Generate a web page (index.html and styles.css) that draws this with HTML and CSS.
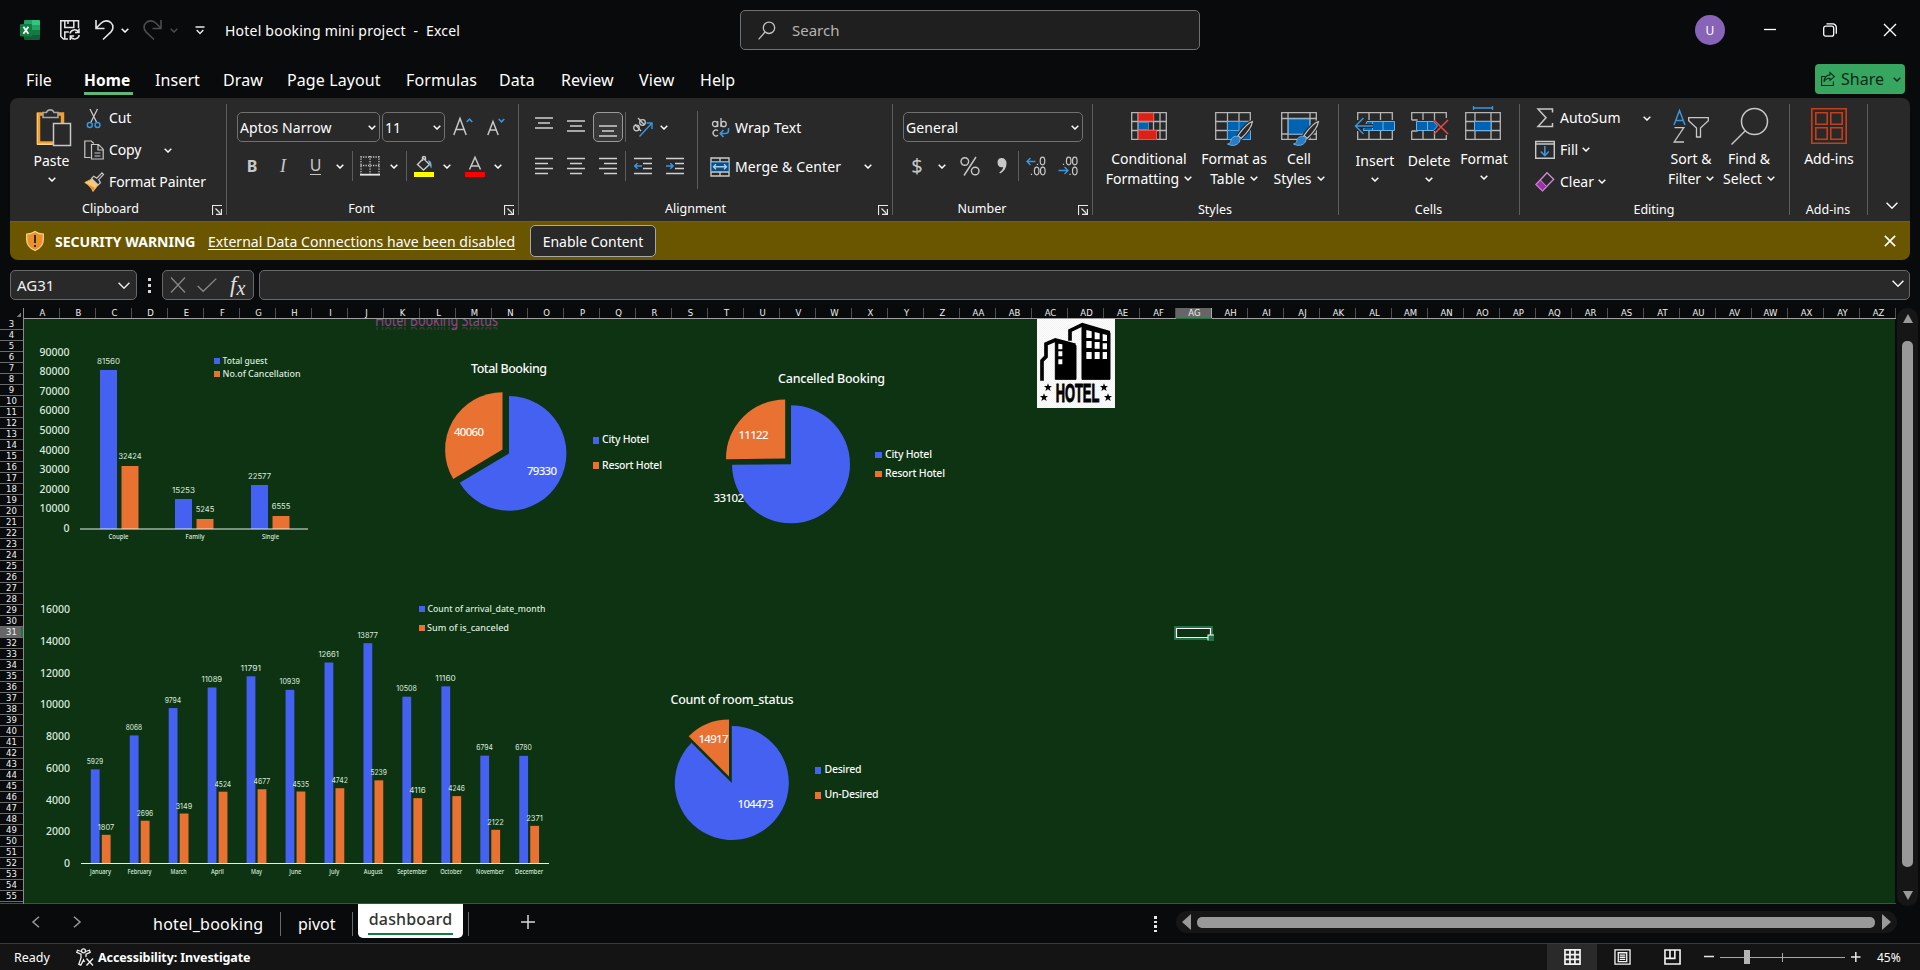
FILE: index.html
```html
<!DOCTYPE html>
<html lang="en">
<head>
<meta charset="utf-8">
<title>Hotel booking mini project - Excel</title>
<link rel="stylesheet" href="styles.css">
</head>
<body>
<svg class="defs" aria-hidden="true">
  <symbol id="chev" viewBox="0 0 8 5"><path d="M.7.8 4 4 7.3.8" fill="none" stroke="currentColor" stroke-width="1.5"/></symbol>
  <symbol id="chev-lg" viewBox="0 0 12 7"><path d="M.6.8 6 6.2 11.4.8" fill="none" stroke="currentColor" stroke-width="1.4"/></symbol>
  <symbol id="launch" viewBox="0 0 10 10"><path d="M.5 10V.5H10M3.5 3.5l5 5M9.4 4v5.4H4" fill="none" stroke="#e8e8e8" stroke-width="1.2"/></symbol>
</svg>

<header class="titlebar">
  <svg class="ico excel" viewBox="0 0 20 20" width="20" height="20"><rect x="4" width="16" height="20" rx="1.2" fill="#185c37"/><path d="M4 1.2Q4 0 5.2 0H12v10H4z" fill="#21a366"/><path d="M12 0h6.8Q20 0 20 1.2V5h-8z" fill="#33c481"/><path d="M12 5h8v5h-8z" fill="#21a366"/><path d="M12 10h8v5h-8z" fill="#107c41"/><rect y="4" width="12" height="12.500" rx="1.200" fill="#107c41"/><path d="M3.400 6.800l5 7M8.400 6.800l-5 7" stroke="#fff" stroke-width="1.800"/></svg>
  <svg class="ico save" viewBox="0 0 20 20" width="20" height="20" fill="none" stroke="#e6e6e6" stroke-width="1.500"><path d="M8 19H3.500L.8 16.500V.8h17.700V8M4.800 1v6.500h9V1M4.800 19v-7h4M8 1v3"/><path d="M10 13.500a4.700 4.700 0 0 1 8.500-1.500M19 8.500V12.500h-4M19.200 15a4.700 4.700 0 0 1-8.500 2M10.300 20v-4h3.800"/></svg>
  <svg class="ico undo" viewBox="0 0 20 20" width="20" height="20" fill="none" stroke="#e6e6e6" stroke-width="1.600"><path d="M1 0v8.500h8.500M1.300 8 6 3.200C9 .2 13.500.2 16 2.700c2.600 2.600 2.600 6.500 0 9.200L8 19.500"/></svg>
  <svg class="chev undo-c"><use href="#chev"/></svg>
  <svg class="ico redo" viewBox="0 0 20 20" width="20" height="20" fill="none" stroke="#4d4d4d" stroke-width="1.600"><path d="M18 0v8.500H9.500M17.700 8 13 3.200C10 .2 5.500.2 3 2.700.4 5.300.4 9.200 3 11.900l8 7.600"/></svg>
  <svg class="chev redo-c"><use href="#chev"/></svg>
  <svg class="ico custom" viewBox="0 0 10 9" width="10" height="9" fill="none" stroke="#e6e6e6" stroke-width="1.500"><path d="M.5 1h9M1.700 4 5 7.400 8.300 4"/></svg>
  <span class="doc-title">Hotel booking mini project&nbsp; -&nbsp; Excel</span>
  <div class="search">
    <svg viewBox="0 0 18 19" width="18" height="19" fill="none" stroke="#c4c4c4" stroke-width="1.300"><circle cx="11" cy="6.800" r="5.700"/><path d="M7 11 .6 18.400"/></svg>
    <span>Search</span>
  </div>
  <div class="window-tools">
    <span class="avatar">U</span>
    <svg class="wbtn" viewBox="0 0 14 14"><path d="M1 6.500h12" stroke="#fff" stroke-width="1.300"/></svg>
    <svg class="wbtn" viewBox="0 0 14 14" fill="none" stroke="#fff" stroke-width="1.300"><rect x=".7" y="3.200" width="10" height="10" rx="2"/><path d="M3.500.9h6.300a3.500 3.500 0 0 1 3.500 3.500v6.300"/></svg>
    <svg class="wbtn" viewBox="0 0 14 14"><path d="M1 1l12 12M13 1 1 13" stroke="#fff" stroke-width="1.400"/></svg>
  </div>
</header>

<nav class="tabs">
  <span class="tab file">File</span><span class="tab home">Home</span><span class="tab insert">Insert</span><span class="tab draw">Draw</span><span class="tab layout">Page Layout</span><span class="tab formulas">Formulas</span><span class="tab data">Data</span><span class="tab review">Review</span><span class="tab view">View</span><span class="tab help">Help</span>
  <button class="share"><svg viewBox="0 0 14 14" width="14" height="14" fill="none" stroke="#0c2a18" stroke-width="1.100"><path d="M4 4.500H.6v9h11.800V9.500M9 .7l4.400 3.900L9 8.300V6.200C6 6.200 4.200 7.400 3 9.800c.2-4 2.500-6.500 6-6.900z"/></svg><span>Share</span><svg class="chev"><use href="#chev"/></svg></button>
</nav>

<section class="ribbon">
  <div class="group clipboard">
    <div class="body">
      <div class="big paste low">
        <svg viewBox="30 104 44 44"><path d="M38.500 114h24v29h-24z" fill="none" stroke="#f0a030" stroke-width="3.500"/><path d="M37.300 113v31.500h15M38.500 144h14" fill="none" stroke="#fbd58a" stroke-width="1"/><path d="M43 117.500v-5h3.500a4 4 0 0 1 7.500 0h4v5z" fill="#292929" stroke="#a6a6a6" stroke-width="1.600"/><path d="M53.500 123.500h17v22h-17z" fill="#292929" stroke="#c8c8c8" stroke-width="1.500"/></svg>
        <span>Paste</span><svg class="chev"><use href="#chev"/></svg>
      </div>
      <div class="list">
        <div class="li"><svg viewBox="0 0 20 20"><path d="M6 1l6.500 13M13.500 1 7 14" stroke="#c8c8c8" stroke-width="1.300" fill="none"/><circle cx="5.800" cy="17" r="2.500" fill="none" stroke="#3a96dd" stroke-width="1.400"/><circle cx="13.500" cy="17" r="2.500" fill="none" stroke="#3a96dd" stroke-width="1.400"/></svg><span>Cut</span></div>
        <div class="li"><svg viewBox="0 0 20 20" fill="none" stroke="#c8c8c8" stroke-width="1.200"><path d="M6.500 17.500H.8V1h6.500l2.500 2.500M7.500 4.500h7l4.700 4.700V19H7.500zM14 4.500V10h5M10.500 13h6M10.500 16h6"/></svg><span>Copy</span><svg class="chev far"><use href="#chev"/></svg></div>
        <div class="li"><svg viewBox="0 0 20 20"><path d="M.8 10.500 8 7l6 6-5 6.500c-1-3.500-4-6.500-8.200-9z" fill="#f7c878" stroke="#f3b24c"/><path d="M3 12l8 4-2 3z" fill="#e8912d"/><path d="M7.500 6.500l2.300-2.300 3 2L18 .9l1.500 1.500-4.800 5.300 1.800 3-2.400 2.300z" fill="#292929" stroke="#c8c8c8" stroke-width="1.200"/></svg><span>Format Painter</span></div>
      </div>
    </div>
    <div class="foot"><span>Clipboard</span><svg class="launch"><use href="#launch"/></svg></div>
  </div>

  <div class="group font">
    <div class="body rows">
      <div class="row font-1">
        <div class="combo"><span>Aptos Narrow</span><svg class="chev"><use href="#chev"/></svg></div>
        <div class="combo size"><span>11</span><svg class="chev"><use href="#chev"/></svg></div>
        <svg class="i20" viewBox="0 0 20 20" fill="none" stroke="#c8c8c8" stroke-width="1.500"><path d="M.8 18 7 1.500 13.200 18M3 12.500h8"/><path d="M13.700 5l2.800-2.800L19.300 5" stroke="#3a96dd" stroke-width="1.600"/></svg>
        <svg class="i20" viewBox="0 0 20 20" fill="none" stroke="#c8c8c8" stroke-width="1.500"><path d="M1.800 18 7 4.500 12.200 18M3.500 13h7"/><path d="M12.700 2l2.800 2.800L18.300 2" stroke="#3a96dd" stroke-width="1.600"/></svg>
      </div>
      <div class="row font-2">
        <b class="glyph">B</b><i class="glyph it">I</i><span class="glyph un">U</span><svg class="chev"><use href="#chev"/></svg><hr>
        <svg class="i20" viewBox="0 0 20 20"><path d="M.5 1h19M.5 9.500h19M1 0v18M10 0v18M19 0v18" stroke="#c8c8c8" stroke-width="1.300" stroke-dasharray="1.300 1.200"/><path d="M0 18.700h20" stroke="#e6e6e6" stroke-width="1.800"/></svg>
        <svg class="chev"><use href="#chev"/></svg><hr>
        <svg class="i20" viewBox="0 0 20 20"><path d="M9.500 2.500l6 6-6 5.500-6-5.500zM8.500 5V1.500Q8.500.5 10 .5t1.500 1V5" fill="none" stroke="#c8c8c8" stroke-width="1.400"/><path d="M14 4.500c3 0 4 2.500 3.500 8-1.300-1.500-2-3.500-2.200-5z" fill="#69b1e6"/><path d="M0 16h20v5H0z" fill="#ff0"/></svg>
        <svg class="chev"><use href="#chev"/></svg>
        <svg class="i20" viewBox="0 0 20 20"><path d="M4.500 13.500 10 1.300 15.500 13.500M6.500 10h7" fill="none" stroke="#c8c8c8" stroke-width="1.500"/><path d="M0 16h20v5H0z" fill="#f00"/></svg>
        <svg class="chev"><use href="#chev"/></svg>
      </div>
    </div>
    <div class="foot"><span>Font</span><svg class="launch"><use href="#launch"/></svg></div>
  </div>

  <div class="group align">
    <div class="body">
      <div class="rows al-left">
        <div class="row al-1">
          <svg class="i18" viewBox="0 0 18 20"><path d="M0 4h18M3 9h12M0 14h18" stroke="#d0d0d0" stroke-width="1.400" transform="translate(0 -3)"/></svg>
          <svg class="i18" viewBox="0 0 18 20"><path d="M0 4h18M3 9h12M0 14h18" stroke="#d0d0d0" stroke-width="1.400"/></svg>
          <span class="pressed"><svg class="i18" viewBox="0 0 18 20"><path d="M0 4h18M3 9h12M0 14h18" stroke="#d0d0d0" stroke-width="1.400" transform="translate(0 5)"/></svg></span><hr>
          <svg class="i20" viewBox="0 0 20 20"><g fill="none" stroke="#c8c8c8" stroke-width="1.300"><ellipse cx="3.500" cy="11" rx="2.800" ry="2.800"/><path d="M2 7.500l6 6.500"/><ellipse cx="9.500" cy="5.500" rx="2.800" ry="2.800"/><path d="M5 1l6 6.500"/></g><path d="M6.500 19.500 19 6M13.500 6H19v6" fill="none" stroke="#3a96dd" stroke-width="1.400"/></svg>
          <svg class="chev"><use href="#chev"/></svg>
        </div>
        <div class="row al-2">
          <svg class="i18" viewBox="0 0 18 20"><path d="M0 2.500h18M0 7.500h13M0 12.500h18M0 17.500h13" stroke="#d0d0d0" stroke-width="1.400"/></svg>
          <svg class="i18" viewBox="0 0 18 20"><path d="M0 2.500h18M3 7.500h12M0 12.500h18M3 17.500h12" stroke="#d0d0d0" stroke-width="1.400"/></svg>
          <svg class="i18" viewBox="0 0 18 20"><path d="M0 2.500h18M5 7.500h13M0 12.500h18M5 17.500h13" stroke="#d0d0d0" stroke-width="1.400"/></svg><hr>
          <svg class="i18" viewBox="0 0 18 20"><path d="M0 2.500h18M9 7.500h9M9 12.500h9M0 17.500h18" stroke="#d0d0d0" stroke-width="1.400"/><path d="M8 10H.8M3.500 7.200.7 10l2.800 2.800" fill="none" stroke="#3a96dd" stroke-width="1.500"/></svg>
          <svg class="i18" viewBox="0 0 18 20"><path d="M0 2.500h18M9 7.500h9M9 12.500h9M0 17.500h18" stroke="#d0d0d0" stroke-width="1.400"/><path d="M0 10h7M4.300 7.200l2.800 2.800-2.800 2.800" fill="none" stroke="#3a96dd" stroke-width="1.500"/></svg>
        </div>
      </div>
      <div class="rows al-right">
        <div class="row li"><svg viewBox="0 0 20 20"><g fill="none" stroke="#c8c8c8" stroke-width="1.300"><ellipse cx="5" cy="6" rx="2.500" ry="2.700"/><path d="M7.700 3v6M11 0v9"/><ellipse cx="13.700" cy="6" rx="2.500" ry="2.700"/><path d="M8 12.700a3 3 0 1 0 0 4.600"/></g><path d="M18.500 10v2.500q0 3-3 3H10.500M13.500 12l-3.300 3.500 3.300 3.500" fill="none" stroke="#3a96dd" stroke-width="1.600"/></svg><span>Wrap Text</span></div>
        <div class="row li"><svg viewBox="0 0 20 20"><path d="M1 1h18v18H1zM10 1v4M10 15v4M1 5h18M1 15h18" fill="none" stroke="#c8c8c8" stroke-width="1.400"/><path d="M1 5h18v9.500H1z" fill="#0f4a7a" stroke="#69b1e6"/><path d="M3.500 9.800h13M6 7.300 3.500 9.800 6 12.300M14 7.300l2.500 2.500L14 12.300" fill="none" stroke="#9fd0f5" stroke-width="1.400"/></svg><span>Merge &amp; Center</span><svg class="chev far"><use href="#chev"/></svg></div>
      </div>
    </div>
    <div class="foot"><span>Alignment</span><svg class="launch"><use href="#launch"/></svg></div>
  </div>

  <div class="group number">
    <div class="body rows">
      <div class="row"><div class="combo gen"><span>General</span><svg class="chev"><use href="#chev"/></svg></div></div>
      <div class="row num-2">
        <span class="glyph dollar">$</span><svg class="chev"><use href="#chev"/></svg>
        <svg class="i20" viewBox="0 0 20 20" fill="none" stroke="#c8c8c8" stroke-width="1.400"><circle cx="4.800" cy="5.500" r="3.800"/><circle cx="15.200" cy="15" r="3.800"/><path d="M16 1 4 19.500"/></svg>
        <svg class="i20" viewBox="0 0 20 20"><path d="M9.500 2a4.800 4.800 0 0 1 5 5c0 5-2.500 8.500-6.500 10.500l-.7-1C9.500 15 11 13 11.200 11 8 12 5.500 10 5.500 6.500 5.500 4 7 2 9.500 2z" fill="#c8c8c8"/></svg><hr>
        <svg class="i20" viewBox="0 0 20 20"><path d="M9.500 5.500H1M4.500 2 1 5.500 4.500 9" fill="none" stroke="#3a96dd" stroke-width="1.400"/><g fill="none" stroke="#c8c8c8" stroke-width="1.200"><ellipse cx="16.500" cy="5" rx="2.300" ry="3.800"/><ellipse cx="10.700" cy="15" rx="2.300" ry="3.800"/><ellipse cx="16.800" cy="15" rx="2.300" ry="3.800"/><path d="M11.500 9V7.800M5.500 19v-1.200"/></g></svg>
        <svg class="i20" viewBox="0 0 20 20"><path d="M.5 14.500H10M6.500 11l3.500 3.500L6.500 18" fill="none" stroke="#3a96dd" stroke-width="1.400"/><g fill="none" stroke="#c8c8c8" stroke-width="1.200"><ellipse cx="10.700" cy="5" rx="2.300" ry="3.800"/><ellipse cx="16.800" cy="5" rx="2.300" ry="3.800"/><ellipse cx="16.800" cy="15" rx="2.300" ry="3.800"/><path d="M5.500 9V7.800M12 19v-1.200"/></g></svg>
      </div>
    </div>
    <div class="foot"><span>Number</span><svg class="launch"><use href="#launch"/></svg></div>
  </div>

  <div class="group styles">
    <div class="body">
      <div class="big w84">
        <svg viewBox="1127 104 44 44"><path d="M1131.700 112.700h34.600v26.600h-34.600zM1131 121.500h36M1131 130.500h36M1138 112v28M1153.500 112v28M1160 112v28" fill="none" stroke="#b5b5b5" stroke-width="1.300"/><path d="M1138.500 113h15v8h-15zM1138.500 130.500h18v9h-18z" fill="#d92316" stroke="#f0504a"/><path d="M1138.500 122.500h10v7h-10z" fill="#0063b1" stroke="#69b1e6" stroke-width=".6"/></svg>
        <span>Conditional</span><span>Formatting <svg class="chev"><use href="#chev"/></svg></span>
      </div>
      <div class="big w86">
        <svg viewBox="1212 104 44 44"><path d="M1215.700 112.700h34.600v26.600h-34.600zM1215 121.500h36M1215 130.500h36M1227.500 112v28M1239 112v28" fill="none" stroke="#b5b5b5" stroke-width="1.300"/><path d="M1227.500 121.500h23v18h-23z" fill="#0063b1" stroke="#69b1e6" stroke-width=".8"/><path d="M1227.500 130.500h23M1239 121.500v18" stroke="#69b1e6" stroke-width=".8"/><path d="M1252.500 121.500c-5 1.500-11 9-14.500 14l3 3c5-4.500 10.500-11 11.500-17z" fill="#292929" stroke="#292929" stroke-width="3.500"/><path d="M1252.500 121.500c-5 1.500-11 9-14.500 14l3 3c5-4.500 10.500-11 11.500-17z" fill="#292929" stroke="#c8c8c8" stroke-width="1.200"/><path d="M1238 136.500c3 .5 2.500 4 .5 6.500-3 3-7 3-11 1 3-.5 3-2 3.500-4 .8-2.500 3.500-4.500 7-3.500z" fill="#2b7cc4" stroke="#69b1e6"/></svg>
        <span>Format as</span><span>Table <svg class="chev"><use href="#chev"/></svg></span>
      </div>
      <div class="big w44">
        <svg viewBox="1278 104 44 44"><path d="M1282.700 112.700h34.600v26.600h-34.600zM1282 118.500h36M1282 134h36M1289 112v28M1311 112v28" fill="none" stroke="#b5b5b5" stroke-width="1.300"/><path d="M1289.500 119h21v15h-21z" fill="#0063b1" stroke="#69b1e6" stroke-width=".8"/><path d="M1319.500 121.500c-5 1.500-11 9-14.500 14l3 3c5-4.500 10.500-11 11.500-17z" fill="#292929" stroke="#292929" stroke-width="3.500"/><path d="M1319.500 121.500c-5 1.500-11 9-14.500 14l3 3c5-4.500 10.500-11 11.500-17z" fill="#292929" stroke="#c8c8c8" stroke-width="1.200"/><path d="M1305 136.500c3 .5 2.500 4 .5 6.500-3 3-7 3-11 1 3-.5 3-2 3.500-4 .8-2.500 3.500-4.500 7-3.500z" fill="#2b7cc4" stroke="#69b1e6"/></svg>
        <span>Cell</span><span>Styles <svg class="chev"><use href="#chev"/></svg></span>
      </div>
    </div>
    <div class="foot low"><span>Styles</span></div>
  </div>

  <div class="group cells">
    <div class="body">
      <div class="big w54 low">
        <svg viewBox="1353 104 44 44"><path d="M1357.700 120v-7.300h34.600V120M1357.700 131v8.300h34.600V131M1369 112v8M1380.500 112v8M1369 131v9M1380.500 131v9" fill="none" stroke="#b5b5b5" stroke-width="1.300"/><path d="M1367 121.500h27.500v9H1363z" fill="#0063b1" stroke="#69b1e6"/><path d="M1372.500 122v8M1383 122v8" stroke="#69b1e6"/><path d="M1373 126h-16M1364 117.500l-8 8.500 8 8.500" fill="none" stroke="#292929" stroke-width="4"/><path d="M1373 126h-17M1363.500 118l-8 8 8 8" fill="none" stroke="#3a96dd" stroke-width="1.500"/></svg>
        <span>Insert</span><svg class="chev"><use href="#chev"/></svg>
      </div>
      <div class="big w54 low">
        <svg viewBox="1407 104 44 44"><path d="M1411.700 120v-7.300h34.600V118M1411.700 120h6M1411.700 131v8.300h34.600V135M1411.700 131h6M1423 112v8M1434.500 112v8M1423 131v9M1434.500 131v9" fill="none" stroke="#b5b5b5" stroke-width="1.300"/><path d="M1416.500 121.500h17l4 4.500-4 4.500h-17z" fill="#0063b1" stroke="#69b1e6"/><path d="M1427.500 122v8" stroke="#69b1e6"/><path d="M1434 120l14 14M1448 120l-14 14" stroke="#e8484a" stroke-width="1.500"/></svg>
        <span>Delete</span><svg class="chev"><use href="#chev"/></svg>
      </div>
      <div class="big w56">
        <svg viewBox="1462 104 44 44"><path d="M1465.700 112.700h34.600v26.600h-34.600zM1465 121.500h36M1465 130.500h36M1475 112v28M1491 112v28" fill="none" stroke="#b5b5b5" stroke-width="1.300"/><path d="M1474.500 121.500h16.500v9h-16.500z" fill="#0063b1" stroke="#69b1e6"/><path d="M1473.500 108h19M1473.500 106v4M1492.500 106v4" stroke="#3a96dd" stroke-width="1.300"/></svg>
        <span>Format</span><svg class="chev"><use href="#chev"/></svg>
      </div>
    </div>
    <div class="foot low"><span>Cells</span></div>
  </div>

  <div class="group editing">
    <div class="body">
      <div class="list">
        <div class="li"><svg viewBox="0 0 20 20"><path d="M17.500 4.500V1H3l8 8.800L3 18.500h14.500V15" fill="none" stroke="#c8c8c8" stroke-width="1.500"/></svg><span>AutoSum</span><svg class="chev far"><use href="#chev"/></svg></div>
        <div class="li"><svg viewBox="0 0 20 20"><path d="M.7 1.500h18.600v16.800H.7zM.7 4h18.600" fill="none" stroke="#c8c8c8" stroke-width="1.400"/><path d="M9.800 6v9M5.800 11.500l4 4 4-4" fill="none" stroke="#3a96dd" stroke-width="1.600"/></svg><span>Fill</span><svg class="chev"><use href="#chev"/></svg></div>
        <div class="li"><svg viewBox="0 0 20 20"><path d="M1 12.500 12 .8l6.700 6.500L7.500 18.800z" fill="none" stroke="#cf8bd8" stroke-width="1.300"/><path d="M1 12.500 5.500 8l6 6.500-4 4.300z" fill="#9a32a8" stroke="#cf8bd8"/></svg><span>Clear</span><svg class="chev"><use href="#chev"/></svg></div>
      </div>
      <div class="big w60">
        <svg viewBox="1669 104 44 44"><path d="M1674 125l5.500-14.500L1685 125M1676 120.500h7" fill="none" stroke="#3a96dd" stroke-width="1.500"/><path d="M1674.500 127.700h9.300l-9.600 14.300h9.800" fill="none" stroke="#c8c8c8" stroke-width="1.300"/><path d="M1688.700 117.700h19.600v3l-7.800 7.300v9h-4v-9l-7.800-7.300z" fill="none" stroke="#c8c8c8" stroke-width="1.300"/></svg>
        <span>Sort &amp;</span><span>Filter <svg class="chev"><use href="#chev"/></svg></span>
      </div>
      <div class="big w56">
        <svg viewBox="1727 104 44 44"><circle cx="1754.500" cy="121.500" r="13" fill="none" stroke="#c8c8c8" stroke-width="1.500"/><path d="M1745 131l-13.500 13.500" stroke="#c8c8c8" stroke-width="1.500"/></svg>
        <span>Find &amp;</span><span>Select <svg class="chev"><use href="#chev"/></svg></span>
      </div>
    </div>
    <div class="foot low"><span>Editing</span></div>
  </div>

  <div class="group addins">
    <div class="body">
      <div class="big">
        <svg viewBox="1807 104 44 44" fill="none" stroke="#c43e1c" stroke-width="1.600"><path d="M1811.800 108.800h34.400v34.400h-34.400zM1815.800 112.800h11.400v11.400h-11.400zM1830.800 112.800h11.400v11.400h-11.400zM1815.800 127.800h11.400v11.400h-11.400zM1830.800 127.800h11.400v11.400h-11.400z"/></svg>
        <span>Add-ins</span>
      </div>
    </div>
    <div class="foot low"><span>Add-ins</span></div>
  </div>
  <div class="collapse"><svg class="chev-lg"><use href="#chev-lg"/></svg></div>
</section>

<section class="warning">
  <svg viewBox="0 0 18 20" width="18" height="20"><path d="M9 .6c2.500 1.800 5 2.500 8.300 2.600V9c0 5-3.500 8.500-8.300 10.500C4.200 17.500.7 14 .7 9V3.200C4 3.100 6.500 2.400 9 .6z" fill="#e8912d" stroke="#fbd58a" stroke-width="1.200"/><path d="M9 4v8" stroke="#3c2a00" stroke-width="2"/><path d="M9 14v2" stroke="#3c2a00" stroke-width="2"/></svg>
  <b>SECURITY WARNING</b><a>External Data Connections have been disabled</a><button>Enable Content</button>
  <svg class="close" viewBox="0 0 14 14" width="12" height="12"><path d="M1 1l12 12M13 1 1 13" stroke="#fff" stroke-width="1.900"/></svg>
</section>

<section class="formula">
  <div class="name-box"><span>AG31</span><svg class="chev-lg"><use href="#chev-lg"/></svg></div>
  <span class="dots"><i></i><i></i><i></i></span>
  <div class="fx-box">
    <svg viewBox="0 0 16 16" width="16" height="16"><path d="M1 .5l14 15M15 .5l-14 15" stroke="#8a8a8a" stroke-width="1.200"/></svg>
    <svg viewBox="0 0 20 14" width="20" height="14"><path d="M.7 8l5.500 5.300L19.300.6" fill="none" stroke="#8a8a8a" stroke-width="1.300"/></svg>
    <span class="fx"><i>f</i><i class="x">x</i></span>
  </div>
  <div class="input"><svg class="chev-lg"><use href="#chev-lg"/></svg></div>
</section>

<main class="grid">
  <div class="sheet">
    <div class="corner"></div>
    <div class="cols" id="cols"></div>
    <div class="rowheads" id="rowheads"></div>
    <svg class="canvas" id="canvas" viewBox="24 319 1871 584" width="1871" height="584">
      <defs>
        <clipPath id="reflect"><rect x="370" y="327" width="140" height="3"/></clipPath>
        <pattern id="checker" width="6" height="6" patternUnits="userSpaceOnUse"><rect width="6" height="6" fill="#fdfdfd"/><rect width="3" height="3" fill="#f3f3f3"/><rect x="3" y="3" width="3" height="3" fill="#f3f3f3"/></pattern>
      </defs>
      <text x="375" y="326" font-size="17" textLength="123" lengthAdjust="spacingAndGlyphs" fill="#a23a99">Hotel Booking Status</text>
      <g clip-path="url(#reflect)" opacity=".4"><text x="375" y="-327" transform="scale(1 -1)" font-size="17" textLength="123" lengthAdjust="spacingAndGlyphs" fill="#a23a99">Hotel Booking Status</text></g>

      <g id="guests"></g>
      <g id="months"></g>

      <g class="pie">
        <path d="M509 453.400V396a57.400 57.400 0 1 1-49.300 86.800z" fill="#4461f2"/>
        <path d="M502.500 449.600l-49.300 29.400A57.400 57.400 0 0 1 502.500 392.200z" fill="#e97132"/>
        <text class="title" x="471" y="373" textLength="76">Total Booking</text>
        <text x="454" y="436" textLength="30">40060</text><text x="527" y="475" textLength="30">79330</text>
        <path d="M593 437h6v7h-6z" fill="#4461f2"/><path d="M593 462h6v7h-6z" fill="#e97132"/>
        <text class="leg" x="602" y="443" textLength="47">City Hotel</text><text class="leg" x="602" y="469" textLength="60">Resort Hotel</text>
      </g>
      <g class="pie">
        <path d="M791 464.300v-59a59 59 0 1 1-59 59.500z" fill="#4461f2"/>
        <path d="M785.200 458.600l-59.200.6a59 59 0 0 1 59.200-59.800z" fill="#e97132"/>
        <text class="title" x="778" y="383" textLength="107">Cancelled Booking</text>
        <text x="738.500" y="439" textLength="30">11122</text><text x="713.500" y="502" textLength="30.500">33102</text>
        <path d="M875 452h7v6h-7z" fill="#4461f2"/><path d="M875 471h7v6h-7z" fill="#e97132"/>
        <text class="leg" x="885" y="458" textLength="47">City Hotel</text><text class="leg" x="885" y="477" textLength="60">Resort Hotel</text>
      </g>
      <g class="pie">
        <path d="M731.800 783v-57a57 57 0 1 1-40.300 16.700z" fill="#4461f2"/>
        <path d="M729 776.500l-40.300-40.300A57 57 0 0 1 729 719.500z" fill="#e97132"/>
        <text class="title" x="670.500" y="704" textLength="123">Count of room_status</text>
        <text x="698.500" y="743" textLength="30">14917</text><text x="737.500" y="808" textLength="36">104473</text>
        <path d="M815 767h6v7h-6z" fill="#4461f2"/><path d="M815 792h6v7h-6z" fill="#e97132"/>
        <text class="leg" x="824.500" y="773" textLength="37">Desired</text><text class="leg" x="824.500" y="798" textLength="54">Un-Desired</text>
      </g>

      <g transform="translate(960 250) scale(.33333)">
        <path d="M231 206h234v268H231z" fill="url(#checker)"/>
        <path d="M366 388V228l84 20v140z" stroke="#000" stroke-width="3"/>
        <path d="M286 388V272l62 14v102z" stroke="#000" stroke-width="3"/>
        <path d="M330 272v-30l37-18 82 24M258 322v-40l28-12 60 16M246 392v-60l12-12v-20" fill="none" stroke="#000" stroke-width="11"/>
        <path d="M379 240l16 4v20h-16zM404 246l15 4v18h-15zM428 252l13 3v18h-13zM379 273h16v21h-16zM404 276h15v20h-15zM428 280h13v18h-13zM379 306h16v21h-16zM404 306h15v21h-15zM428 306h13v21h-13zM295 281l12 2v15h-12zM295 304h12v15h-12zM295 328h12v15h-12z" fill="#fff"/>
        <text x="287" y="455" font-size="75" font-weight="bold" textLength="131" lengthAdjust="spacingAndGlyphs" class="logo-text">HOTEL</text>
        <path id="star" d="M264 400l3 8h9l-7 6 3 9-8-5-8 5 3-9-7-6h9z"/>
        <use href="#star" x="168"/><use href="#star" x="-12" y="30"/><use href="#star" x="180" y="30"/>
      </g>

      <path d="M1175 627h37v12h-37z" fill="none" stroke="#217346" stroke-width="2"/>
      <path d="M1176.500 628.500h34v9h-34z" fill="none" stroke="#fff" stroke-width="1.200"/>
      <path d="M1207.500 634.500h6.500v6h-6.500z" fill="#fff"/><path d="M1208.500 635.500h5.500v5.500h-5.500z" fill="#217346"/>
    </svg>
  </div>
  <div class="vscroll"><i class="up"></i><i class="thumb"></i><i class="down"></i></div>
</main>

<section class="sheet-tabs">
  <svg class="nav prev" viewBox="0 0 8 12"><path d="M7 .8 1 6l6 5.200" fill="none" stroke="#9a9a9a" stroke-width="1.500"/></svg>
  <svg class="nav next" viewBox="0 0 8 12"><path d="M1 .8 7 6l-6 5.200" fill="none" stroke="#9a9a9a" stroke-width="1.500"/></svg>
  <span class="st hb">hotel_booking</span><span class="st pv">pivot</span><span class="st active"><b>dashboard</b></span>
  <svg class="plus" viewBox="0 0 14 14"><path d="M7 0v14M0 7h14" stroke="#d8d8d8" stroke-width="1.500"/></svg>
  <span class="dots sm"><i></i><i></i><i></i><i></i></span>
  <div class="hscroll"><i class="left"></i><i class="thumb"></i><i class="right"></i></div>
</section>

<footer class="status">
  <span class="ready">Ready</span>
  <svg class="acc" viewBox="0 0 18 18" width="18" height="18" fill="none" stroke="#f0f0f0" stroke-width="1.300"><circle cx="7.500" cy="2.800" r="2"/><path d="M5.500 3.500 1.500 2.200.8 4.300 5 6.200V10L2.800 16.300l2 .8L7.500 12l1 2M9.500 3.500l4-1.300.7 2.100L10 6.200V9M10.500 10.500l6.500 7M17 10.500l-6.500 7"/></svg>
  <b>Accessibility: Investigate</b>
  <div class="views">
    <span class="vw on"><svg viewBox="0 0 18 17"><path d="M1 1h16v15H1zM6.300 1v15M11.600 1v15M1 6h16M1 11h16" fill="none" stroke="#f4f4f4" stroke-width="1.800"/></svg></span>
    <span class="vw"><svg viewBox="0 0 18 17"><path d="M1 1h16v15H1zM4.500 4h9v9.500h-9zM6 6.500h6M6 8.800h6M6 11h6" fill="none" stroke="#f4f4f4" stroke-width="1.400"/></svg></span>
    <span class="vw"><svg viewBox="0 0 18 17"><path d="M1 1h16v15H1zM6.300 1v9M1 10h10.500V1" fill="none" stroke="#f4f4f4" stroke-width="1.700"/></svg></span>
  </div>
  <svg class="zoom" viewBox="1704 948 157 18" width="157" height="18"><path d="M1704 956.500h10M1851 957h9.500M1855.800 952v10" stroke="#e6e6e6" stroke-width="1.500"/><path d="M1720 957.500h125M1782.500 953v9" stroke="#a8a8a8"/><path d="M1744 950h6v14h-6z" fill="#b4b4b4"/></svg>
  <span class="pct">45%</span>
</footer>
<script src="app.js"></script>
</body>
</html>
```
FILE: styles.css
```css
* { box-sizing: border-box; }
body { margin: 0; width: 1920px; height: 970px; overflow: hidden; background: #090a0b; color: #fff; font: 14px/20px "Noto Sans", "Open Sans", sans-serif; display: flex; flex-direction: column; }
svg { display: block; flex: none; overflow: visible; }
span, b, a { white-space: nowrap; }
button { font: inherit; color: inherit; }
.defs { position: absolute; width: 0; height: 0; }
.chev { width: 8px; height: 5px; }
.chev-lg { width: 12px; height: 7px; }
hr { width: 1px; height: 30px; margin: 0; border: 0; background: #5c5c5c; }

/* title bar */
.titlebar { height: 60px; display: flex; align-items: center; padding-left: 20px; }
.save { margin-left: 20px; }
.undo { margin-left: 15px; }
.undo-c { margin-left: 6px; }
.redo { margin-left: 14px; }
.redo-c { margin-left: 7px; color: #4d4d4d; }
.custom { margin-left: 17px; }
.doc-title { margin-left: 20px; width: 515px; letter-spacing: .22px; padding-top: 1px; }
.search { width: 460px; height: 40px; border: 1px solid #707070; border-radius: 5px; background: #1f1f1f; display: flex; align-items: center; padding-left: 17px; gap: 16px; color: #b4b4b4; font-size: 15px; line-height: 18px; }
.search span { padding-bottom: 1px; }
.window-tools { margin-left: 495px; display: flex; align-items: center; }
.avatar { width: 30px; height: 30px; border-radius: 50%; background: #8764b8; font-size: 12px; line-height: 31px; text-align: center; }
.wbtn { width: 14px; height: 14px; margin-left: 46px; }
.avatar + .wbtn { margin-left: 38px; }

/* ribbon tabs */
.tabs { height: 38px; display: flex; align-items: flex-start; padding-left: 26px; font-size: 16px; line-height: 24px; }
.tab { padding-top: 8px; height: 35px; letter-spacing: .1px; }
.file { width: 58px; }
.home { width: 49px; margin-right: 22px; border-bottom: 3px solid #5fb878; font-weight: 700; font-size: 15.500px; }
.insert { width: 68px; }
.draw { width: 64px; }
.layout { width: 119px; }
.formulas { width: 93px; }
.data { width: 62px; }
.review { width: 78px; }
.view { width: 61px; }
.help { width: 1115px; }
.share { width: 90px; height: 30px; margin-top: 4px; border: 0; border-radius: 4px; background: #37a660; color: #0c2a18; display: flex; align-items: center; padding: 0 0 0 6px; gap: 6px; }
.share .chev { margin-left: 3px; }

/* ribbon */
.ribbon { margin: 0 10px; height: 124px; background: #292929; border-radius: 8px 8px 0 0; border-bottom: 1px solid #5e5e5e; display: flex; }
.group { height: 123px; position: relative; display: flex; flex-direction: column; }
.group::after { content: ""; position: absolute; right: 0; top: 6px; width: 1px; height: 111px; background: #5c5c5c; }
.body { height: 101px; flex: none; display: flex; }
.foot { height: 20px; flex: none; display: flex; justify-content: center; font-size: 12.500px; position: relative; }
.foot.low { padding: 1px 2px 0 0; }
.launch { position: absolute; right: 5px; top: 6px; width: 10px; height: 10px; }
.clipboard { width: 217px; }
.clipboard .foot { padding-right: 16px; }
.font { width: 292px; }
.font .foot { padding-right: 23px; }
.align { width: 374px; }
.align .foot { padding-right: 21px; }
.number { width: 200px; }
.number .foot { padding-right: 22px; }
.styles { width: 246px; }
.cells { width: 181px; }
.editing { width: 270px; }
.addins { width: 78px; }
.collapse { width: 42px; padding: 104px 0 0 18px; }
.big { display: flex; flex-direction: column; align-items: center; padding-top: 6px; }
.big > svg:first-child { width: 44px; height: 44px; margin-bottom: 1px; }
.big.low > svg:first-child { margin-bottom: 3px; }
.big > span { height: 20px; display: flex; align-items: center; gap: 5px; }
.big > span .chev { margin-top: -2px; }
.big > .chev { margin-top: 6px; }
.paste { width: 63px; margin-left: 10px; }
.list { padding-top: 4px; margin-left: 1px; }
.li { height: 32px; display: flex; align-items: center; gap: 5px; }
.list .li > svg:first-child { width: 20px; height: 20px; }
.clipboard .li span { letter-spacing: -.12px; }
.clipboard .far { margin-left: 18px; }
.rows { display: flex; flex-direction: column; gap: 9px; padding-top: 14px; }
.row { height: 30px; display: grid; align-items: center; justify-items: center; }
.rows.body { flex-direction: column; padding-left: 10px; }
.combo { width: 143px; height: 30px; border: 1px solid #707070; border-radius: 5px; display: flex; align-items: center; justify-content: space-between; padding: 1px 3px 0 2px; letter-spacing: .1px; }
.combo.size { width: 63px; margin-left: 2px; }
.combo.gen { width: 180px; }
.number .row:first-child { justify-items: start; }
.i20 { width: 20px; height: 20px; }
.i18 { width: 18px; height: 20px; }
.font-1 { grid-template-columns: 143px 65px 35px 31px; }
.font-2 { grid-template-columns: 30px 32px 33px 15px 11px 23px 25px 1px 34px 12px 44px 2px; }
.glyph { font-size: 16px; color: #c8c8c8; }
.it { font-family: "Liberation Serif", serif; font-size: 18px; }
.un { border-bottom: 1.500px solid #c8c8c8; line-height: 17px; }
.al-left { width: 179px; padding-left: 10px; }
.al-left::after { content: ""; position: absolute; left: 178px; top: 13px; width: 1px; height: 78px; background: #5c5c5c; }
.al-1 { grid-template-columns: 30px 34px 30px 5px 30px 12px; }
.al-2 { grid-template-columns: 30px 34px 30px 5px 30px 34px; }
.pressed { width: 30px; height: 30px; border: 1px solid #9a9a9a; border-radius: 5px; background: #383838; display: grid; place-items: center; }
.al-right { padding-left: 12px; letter-spacing: .12px; }
.al-right .row { display: flex; padding-top: 1px; }
.al-right .li > svg:first-child { width: 20px; height: 20px; }
.al-right .far { margin-left: 18px; }
.num-2 { grid-template-columns: 28px 21px 35px 29px 5px 29px 35px; }
.dollar { font-size: 20px; }
.styles .body { padding-left: 14px; }
.cells .body { padding-left: 9px; }
.w84 { width: 84px; }
.w86 { width: 86px; }
.w44 { width: 44px; }
.w54 { width: 54px; }
.w56 { width: 56px; }
.w60 { width: 60px; }
.editing .list { margin-left: 15px; width: 126px; }
.editing .li .chev { margin-left: -1px; margin-top: -2px; }
.editing .li .far { margin: 0 0 0 17px; }
.addins .big { width: 78px; }

/* security bar */
.warning { margin: 0 10px; height: 38px; border-radius: 0 0 8px 8px; background: #6b5600; display: flex; align-items: center; padding-left: 16px; }
.warning b { margin-left: 11px; width: 153px; font-size: 14px; padding-top: 1px; }
.warning a { width: 322px; text-decoration: underline; text-underline-offset: 2px; padding-top: 1px; letter-spacing: .05px; }
.warning button { width: 126px; height: 32px; padding: 1px 0 0; border: 1px solid #a8a8a8; border-radius: 5px; background: #292929; }
.warning .close { margin-left: auto; margin-right: 14px; }

/* formula bar */
.formula { height: 48px; padding: 10px 10px 0; display: flex; }
.name-box, .fx-box, .input { height: 30px; border: 1px solid #686868; border-radius: 5px; background: #292929; display: flex; align-items: center; }
.name-box { width: 127px; padding: 0 6px; justify-content: space-between; font-size: 15px; color: #f0f0f0; }
.dots { width: 25px; display: flex; flex-direction: column; align-items: center; justify-content: center; gap: 3px; }
.dots i { width: 3px; height: 3px; background: #d8d8d8; }
.formula .dots { height: 30px; }
.fx-box { width: 92px; padding-left: 7px; gap: 11px; }
.fx { font: 23px/22px "Liberation Serif", serif; color: #e0e0e0; width: 20px; display: flex; align-items: center; padding-left: 2px; }
.fx .x { font-size: 20px; padding-top: 5px; }
.input { margin-left: 5px; flex: 1; justify-content: flex-end; padding: 0 5px 3px 0; }

/* sheet */
.grid { height: 596px; display: flex; }
.sheet { width: 1896px; display: grid; grid-template: 11px 585px / 24px 1872px; border-bottom: 1px solid #4a4a4a; }
.corner { border-right: 1px solid #8a8a8a; background: linear-gradient(135deg, #0000 50%, #777 50%) 17px 5px / 4px 4px no-repeat; }
.cols { display: flex; border-bottom: 1px solid #a0a0a0; font: 8.500px/11px "DejaVu Sans", sans-serif; }
.cols span { width: 36px; text-align: center; border-right: 1px solid #505050; padding-left: 2px; color: #f0f0f0; }
.cols .on { background: #666; border-color: #aaa; box-shadow: 0 1px #217346; }
.rowheads { border-right: 1px solid #8a8a8a; overflow: hidden; font: 8.500px/11px "DejaVu Sans", sans-serif; color: #f0f0f0; }
.rowheads span { display: block; height: 11px; border-bottom: 1px solid #6a6a6a; text-align: center; }
.rowheads .on { background: #666; box-shadow: inset -2px 0 #217346; }
.canvas { background: #0d3312; overflow: hidden; font-family: "Noto Sans", sans-serif; }
.canvas text { white-space: pre; }
.pie text { fill: #fafafa; font-size: 11.500px; font-weight: 500; }
.pie .title { font-size: 12.500px; }
.pie .leg { font-size: 10.500px; }
.canvas .axis { fill: #dcebdf; font-size: 11px; font-weight: 500; }
.canvas .val { fill: #dcebdf; font: 7.500px Inter, sans-serif; }
.canvas .cat { fill: #dcebdf; font-size: 6.500px; font-weight: 500; }
.canvas .key { fill: #dcebdf; font-size: 9px; font-weight: 500; }
.logo-text { font-family: "Liberation Sans", sans-serif; stroke: #000; stroke-width: 3px; }
.vscroll { width: 21px; margin-left: 1px; height: 598px; border-radius: 10px; background: #161616; display: flex; flex-direction: column; align-items: center; padding-top: 6px; }
.up { border: 5.500px solid transparent; border-top: 0; border-bottom: 9px solid #999; }
.down { border: 5.500px solid transparent; border-bottom: 0; border-top: 9px solid #999; }
.vscroll .thumb { width: 11px; height: 526px; margin: 18px 0 24px; border-radius: 5px; background: #999; }

/* sheet tabs */
.sheet-tabs { height: 39px; display: flex; align-items: flex-start; font-size: 16px; }
.nav { width: 8px; height: 12px; margin-top: 12px; }
.prev { margin-left: 32px; }
.next { margin-left: 33px; }
.st { position: relative; line-height: 24px; }
.st::after { content: ""; position: absolute; right: 0; top: 8px; width: 1px; height: 24px; background: #6a6a6a; }
.hb { margin-left: 72px; width: 128px; padding-top: 8px; letter-spacing: .25px; }
.pv { width: 72px; padding: 8px 0 0 17px; }
.active { width: 116px; padding-left: 5px; }
.active b { display: block; width: 105px; height: 34px; padding: 3px 0 0; text-align: center; background: #fff linear-gradient(#107c41, #107c41) 10px 29px / 85px 2px no-repeat; border-radius: 0 0 5px 5px; color: #333; font-size: 16px; font-weight: 500; letter-spacing: .15px; }
.plus { width: 14px; height: 14px; margin: 11px 0 0 52px; }
.dots.sm { width: 5px; margin: 12px 0 0 618px; gap: 2px; }
.dots.sm i { width: 3px; height: 2.500px; background: #e6e6e6; flex: none; }
.hscroll { width: 721px; height: 22px; margin: 7px 0 0 18px; border-radius: 11px; background: #161616; display: flex; align-items: center; padding-left: 6px; }
.left { border: 8px solid transparent; border-left: 0; border-right: 9px solid #999; }
.right { border: 8px solid transparent; border-right: 0; border-left: 9px solid #999; }
.hscroll .thumb { width: 678px; height: 11px; margin: 0 7px 0 6px; border-radius: 5px; background: #999; }

/* status bar */
.status { height: 27px; border-top: 1px solid #3a3a3a; background: #141414; display: flex; align-items: center; font-size: 12.500px; padding-left: 14px; }
.ready { width: 62px; padding-top: 1px; }
.status b { margin-left: 4px; width: 1449px; font-size: 12.500px; letter-spacing: -.1px; padding-top: 1px; }
.views { display: flex; height: 26px; }
.vw { width: 50px; display: grid; place-items: center; }
.on.vw { background: #2a2a2a; }
.vw svg { width: 17px; height: 16px; }
.zoom { margin-left: 7px; }
.pct { margin-left: 16px; font-size: 12px; padding-top: 1px; }
```
FILE: app.js
```js
const BLUE = '#4461f2', ORANGE = '#e97132', LINE = '#e8efe8';

function colName(n) {
  return n < 26 ? String.fromCharCode(65 + n) : 'A' + String.fromCharCode(65 + n - 26);
}
let html = '';
for (let i = 0; i < 52; i++) html += `<span${i === 32 ? ' class="on"' : ''}>${colName(i)}</span>`;
document.getElementById('cols').innerHTML = html;

html = '';
for (let r = 3; r <= 55; r++) html += `<span${r === 31 ? ' class="on"' : ''}>${r}</span>`;
document.getElementById('rowheads').innerHTML = html;

const rect = (x, y, w, h, fill) => `<rect x="${x}" y="${y}" width="${w}" height="${h}" fill="${fill}"/>`;
function label(cls, s, cx, y, w) {
  return `<text class="${cls}" x="${cx - w / 2}" y="${y}" textLength="${w}" lengthAdjust="spacingAndGlyphs">${s}</text>`;
}

// Guests and cancellations by party type
let g = '';
for (let i = 0; i <= 9; i++) {
  const s = String(i * 10000), w = s.length * 6;
  g += label('axis', s, 69.500 - w / 2, 532 - i * 19.600, w);
}
const guests = [['Couple', 81560, 32424, 100, 118.500, 20], ['Family', 15253, 5245, 175, 195, 19], ['Single', 22577, 6555, 251, 270.500, 17]];
for (const [name, a, b, x, cx, w] of guests) {
  const ya = Math.round(529 - a * 0.00195), yb = Math.round(529 - b * 0.00195);
  g += rect(x, ya, 17, 529 - ya, BLUE) + rect(x + 21.500, yb, 17, 529 - yb, ORANGE);
  g += label('val', a, x + 8.500, ya - 6, 23) + label('val', b, x + 30, yb - 7, b > 9999 ? 23 : 18.500);
  g += label('cat', name, cx, 539, w);
}
g += rect(80, 528.500, 228, 1, LINE);
g += rect(214, 358, 6, 6, BLUE) + label('key', 'Total guest', 245, 364, 45);
g += rect(214, 371, 6, 6, ORANGE) + label('key', 'No.of Cancellation', 261.500, 377, 78);
document.getElementById('guests').innerHTML = g;

// Arrivals and cancellations by month
const months = [['January', 5929, 1807], ['February', 8068, 2696], ['March', 9794, 3149], ['April', 11089, 4524], ['May', 11791, 4677], ['June', 10939, 4535], ['July', 12661, 4742], ['August', 13877, 5239], ['September', 10508, 4116], ['October', 11160, 4246], ['November', 6794, 2122], ['December', 6780, 2371]];
const catWidths = [21, 24, 16, 13, 11, 12, 10, 19, 30, 22, 28, 28];
let m = '';
for (let i = 0; i <= 8; i++) {
  const s = String(i * 2000), w = s.length * 6;
  m += label('axis', s, 70 - w / 2, 867 - i * 31.750, w);
}
months.forEach(([name, a, b], i) => {
  const x = 90.800 + i * 38.950, ya = 863.500 - a * 0.015875, yb = 863.500 - b * 0.015875;
  m += rect(x, ya, 8.800, 863.500 - ya, BLUE) + rect(x + 11, yb, 8.800, 863.500 - yb, ORANGE);
  m += label('val', a, x + 4.200, ya - 5.500, a > 9999 ? 20.500 : 16.500) + label('val', b, x + 15.200, yb - 5, 16.500);
  m += label('cat', name, x + 9.800, 874, catWidths[i]);
});
m += rect(81, 863, 468, 1, LINE);
m += rect(419, 606, 6, 6, BLUE) + label('key', 'Count of arrival_date_month', 486.500, 612, 118);
m += rect(419, 625, 6, 6, ORANGE) + label('key', 'Sum of is_canceled', 468, 631, 82);
document.getElementById('months').innerHTML = m;
```
